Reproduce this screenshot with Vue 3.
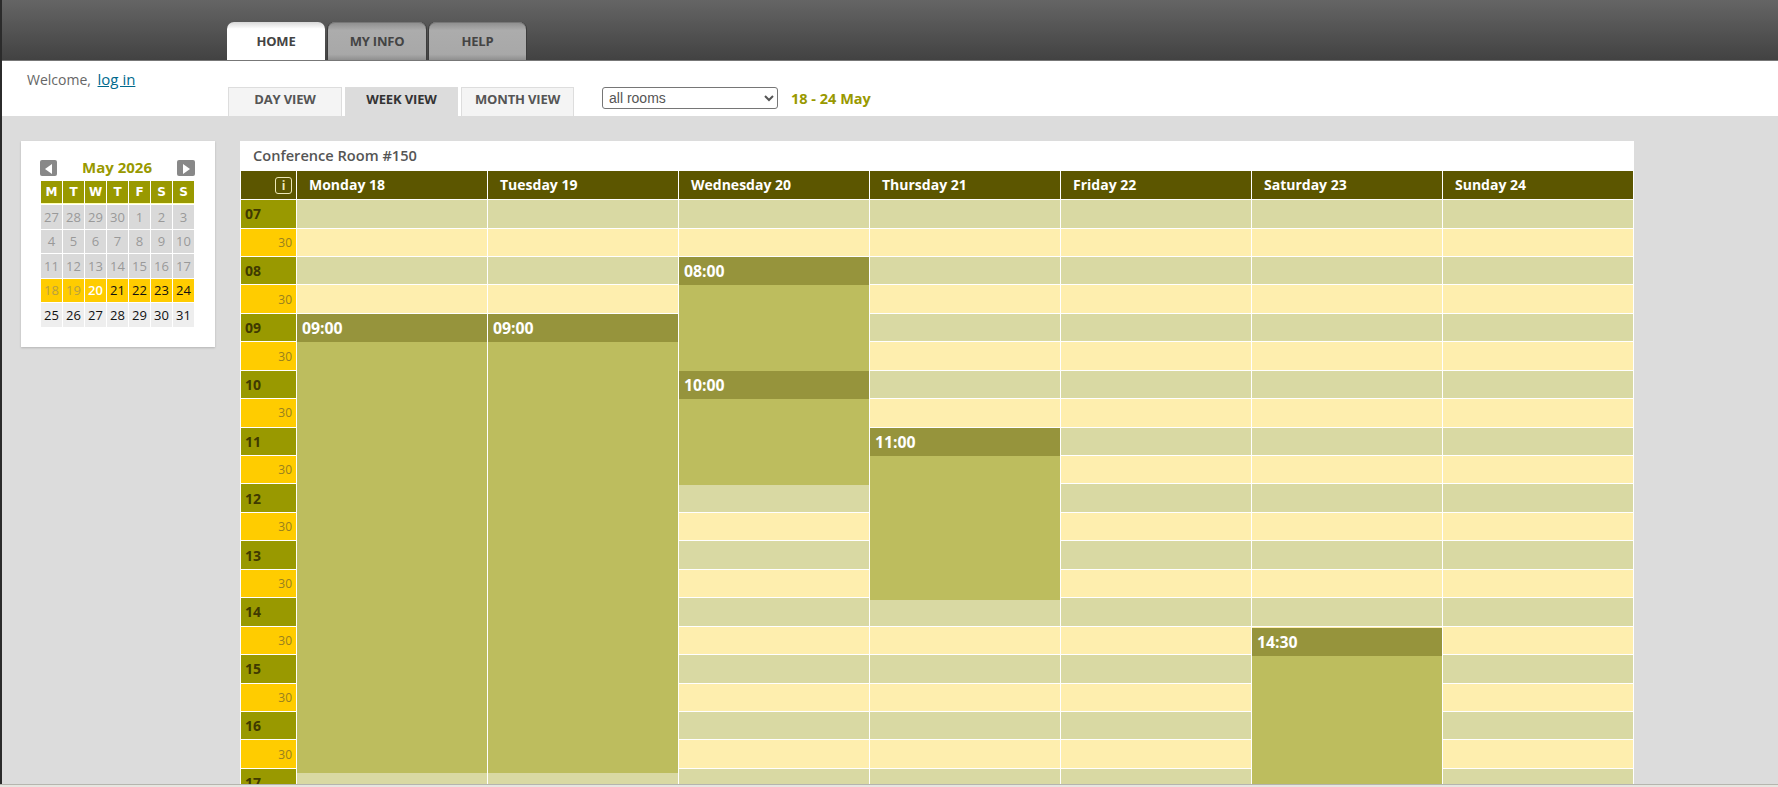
<template>
  <div class="page">
    <div class="topbar">
      <a class="tab is-active">HOME</a>
      <a class="tab">MY INFO</a>
      <a class="tab">HELP</a>
    </div>

    <div class="subbar">
      <div class="welcome">Welcome, <a class="login">log in</a></div>
      <div class="views">
        <a class="view">DAY VIEW</a>
        <a class="view is-active">WEEK VIEW</a>
        <a class="view">MONTH VIEW</a>
      </div>
      <select class="rooms">
        <option>all rooms</option>
      </select>
      <span class="range">18 - 24 May</span>
    </div>

    <div class="content">
      <aside class="side">
        <div class="month-nav">
          <span class="nav-btn"><svg width="17" height="16" viewBox="0 0 17 16"><path d="M12 3v10L5 8z" fill="#fff" /></svg></span>
          <span class="month-title">May 2026</span>
          <span class="nav-btn"><svg width="18" height="16" viewBox="0 0 18 16"><path d="M6 3v10L13 8z" fill="#fff" /></svg></span>
        </div>
        <div class="mini">
          <span v-for="(d, i) in weekLetters" :key="'h' + i" class="mini-head">{{ d }}</span>
          <span v-for="(d, i) in miniDays" :key="i" class="mini-day" :class="d.cls">{{ d.n }}</span>
        </div>
      </aside>

      <section class="main">
        <div class="room-title">Conference Room #150</div>
        <div class="sched">
          <div class="grid">
            <div class="head info-cell"><span class="info">i</span></div>
            <div v-for="d in days" :key="d" class="head">{{ d }}</div>
            <template v-for="s in slots" :key="s.key">
              <div class="time" :class="s.half ? 'time-half' : 'time-hour'">{{ s.label }}</div>
              <div v-for="n in 7" :key="n" class="cell" :class="s.half ? 'cell-half' : 'cell-hour'"></div>
            </template>
          </div>
          <div v-for="e in events" :key="e.day + e.label" class="event" :style="eventStyle(e)">
            <div class="event-head">{{ e.label }}</div>
          </div>
        </div>
      </section>
    </div>
  </div>
  <div class="page-end"></div>
</template>

<script setup>
const SLOT = 28.45;
const FIRST_HOUR = 7;

const weekLetters = ['M', 'T', 'W', 'T', 'F', 'S', 'S'];
const days = ['Monday 18', 'Tuesday 19', 'Wednesday 20', 'Thursday 21', 'Friday 22', 'Saturday 23', 'Sunday 24'];

const miniDays = [];
[27, 28, 29, 30].forEach((n) => miniDays.push({ n, cls: 'is-past' }));
for (let n = 1; n <= 17; n++) miniDays.push({ n, cls: 'is-past' });
miniDays.push({ n: 18, cls: 'is-week is-gone' }, { n: 19, cls: 'is-week is-gone' }, { n: 20, cls: 'is-week is-today' });
for (let n = 21; n <= 24; n++) miniDays.push({ n, cls: 'is-week' });
for (let n = 25; n <= 31; n++) miniDays.push({ n, cls: 'is-next' });

const slots = [];
for (let h = FIRST_HOUR; h <= 17; h++) {
  slots.push({ key: h + ':00', half: false, label: String(h).padStart(2, '0') });
  slots.push({ key: h + ':30', half: true, label: '30' });
}

const events = [
  { day: 0, start: 9, end: 17.07, label: '09:00' },
  { day: 1, start: 9, end: 17.07, label: '09:00' },
  { day: 2, start: 8, end: 10, label: '08:00' },
  { day: 2, start: 10, end: 12, label: '10:00' },
  { day: 3, start: 11, end: 14.03, label: '11:00' },
  { day: 5, start: 14.52, end: 18, label: '14:30' },
];

const eventStyle = (e) => ({
  left: 57 + e.day * 191 + 'px',
  top: 29.1 + (e.start - FIRST_HOUR) * 2 * SLOT + 'px',
  height: (e.end - e.start) * 2 * SLOT + 'px',
});
</script>

<style scoped>
.page {
  height: 784px;
  overflow: hidden;
  border-left: 2px solid #2b2b2b;
  background: #dcdcdc;
  font-family: "Open Sans", "Noto Sans", sans-serif;
}

.page-end {
  height: 3px;
  box-sizing: border-box;
  border-top: 1px solid #b5b5ae;
  background: #e6e6e0;
}

.topbar {
  height: 61px;
  box-sizing: border-box;
  padding-left: 225px;
  display: flex;
  align-items: flex-end;
  background: linear-gradient(#656565, #424242);
  border-bottom: 1px solid #777;
}

.tab {
  width: 98px;
  height: 38px;
  margin-right: 3px;
  padding-bottom: 1px;
  display: flex;
  align-items: center;
  justify-content: center;
  box-sizing: border-box;
  border-radius: 7px 7px 0 0;
  background: linear-gradient(#8c8c8c, #acacac 22%, #a8a8a8 85%, #8f8f8f);
  box-shadow: inset 0 1px 0 #777, 1px 0 0 #3c3c3c, -1px 0 0 #3c3c3c;
  color: #444;
  font-size: 13px;
  font-weight: 700;
  letter-spacing: -0.2px;
}

.tab:last-child {
  width: 97px;
}

.tab.is-active {
  background: linear-gradient(#d8d8d8, #fff 18%);
  box-shadow: none;
  color: #444;
}

.subbar {
  height: 55px;
  display: flex;
  background: #fff;
}

.welcome {
  width: 226px;
  box-sizing: border-box;
  padding: 8px 0 0 25px;
  color: #666;
  font-size: 14px;
}

.login {
  margin-left: 3px;
  color: #006a8e;
  font-size: 15px;
  text-decoration: underline;
}

.views {
  display: flex;
  gap: 3px;
  align-self: flex-end;
}

.view {
  width: 113px;
  height: 29px;
  padding-bottom: 6px;
  box-sizing: border-box;
  display: flex;
  align-items: center;
  justify-content: center;
  border: 1px solid #ddd;
  border-bottom: 0;
  background: #f4f4f4;
  color: #555;
  font-size: 13px;
  font-weight: 700;
  letter-spacing: -0.15px;
}

.view:first-child {
  width: 114px;
}

.view.is-active {
  background: #dcdcdc;
  border-color: #dcdcdc;
  color: #333;
}

.rooms {
  width: 176px;
  height: 22px;
  margin: 26px 0 0 28px;
  padding-left: 2px;
  border: 1px solid #767676;
  border-radius: 3px;
  background: #fff;
  color: #555;
  font-family: "Liberation Sans", sans-serif;
  font-size: 14px;
}

.range {
  margin: 28px 0 0 13px;
  color: #999900;
  font-size: 14.5px;
  font-weight: 700;
}

.content {
  display: flex;
  align-items: flex-start;
  padding: 25px 0 0 19px;
}

.side {
  width: 194px;
  height: 206px;
  box-sizing: border-box;
  padding: 19px 0 0 20px;
  margin-right: 25px;
  background: #fff;
  box-shadow: 0 1px 2px rgba(0, 0, 0, 0.18);
}

.month-nav {
  width: 154px;
  height: 21px;
  display: flex;
  justify-content: space-between;
}

.nav-btn {
  width: 17px;
  height: 16px;
  margin-left: -1px;
  border-radius: 2px;
  background: #888;
}

.nav-btn:last-child {
  width: 18px;
  margin-left: 0;
}

.month-title {
  color: #999900;
  font-size: 15px;
  font-weight: 700;
  line-height: 15px;
}

.mini {
  display: grid;
  grid-template-columns: repeat(7, 21px);
  grid-template-rows: 23px;
  grid-auto-rows: 23.5px;
  gap: 1px;
}

.mini-head {
  display: flex;
  align-items: center;
  justify-content: center;
  background: #999900;
  border-bottom: 1px solid #ffffb0;
  color: #fff;
  font-family: "DejaVu Sans", sans-serif;
  font-size: 12px;
  font-weight: 700;
}

.mini-day {
  display: flex;
  align-items: center;
  justify-content: center;
  font-size: 13px;
}

.is-past {
  background: #d9d9d9;
  color: #999;
}

.is-week {
  background: #ffcc00;
  color: #111;
}

.is-gone {
  color: #b8a040;
}

.is-today {
  color: #fff;
  font-weight: 600;
}

.is-next {
  background: #eeeeee;
  color: #111;
}

.main {
  width: 1394px;
  background: #fff;
}

.room-title {
  height: 30px;
  box-sizing: border-box;
  padding: 4px 0 0 13px;
  color: #555;
  font-size: 14.6px;
  font-weight: 600;
}

.sched {
  position: relative;
  padding-left: 1px;
}

.grid {
  display: grid;
  grid-template-columns: 55px repeat(7, 190px);
  grid-template-rows: 28.1px;
  grid-auto-rows: 27.45px;
  gap: 1px;
}

.head {
  display: flex;
  align-items: center;
  padding: 0 0 2px 12px;
  box-sizing: border-box;
  background: #5c5600;
  color: #fff;
  font-size: 14px;
  font-weight: 700;
}

.info-cell {
  justify-content: flex-end;
  padding: 0 4px 0 0;
}

.info {
  width: 17px;
  height: 17px;
  box-sizing: border-box;
  display: flex;
  align-items: center;
  justify-content: center;
  border: 1px solid #eee9b8;
  border-radius: 3px;
  color: #eee9b8;
  font-size: 12px;
  font-weight: 700;
}

.time {
  display: flex;
  align-items: center;
  font-size: 13px;
}

.time-hour {
  padding-left: 4px;
  background: #999900;
  color: #3f3a00;
  font-size: 14px;
  font-weight: 700;
}

.time-half {
  justify-content: flex-end;
  padding-right: 4px;
  background: #ffcc00;
  color: #98801f;
  font-size: 12px;
}

.cell-hour {
  background: #d9d9a3;
}

.cell-half {
  background: #feeeae;
}

.event {
  position: absolute;
  width: 190px;
  background: #bdbd5e;
}

.event-head {
  height: 28px;
  box-sizing: border-box;
  padding-left: 5px;
  display: flex;
  align-items: center;
  background: #96943c;
  color: #fff;
  font-size: 15.8px;
  font-weight: 700;
}
</style>

<style>
html,
body {
  margin: 0;
  overflow: hidden;
  background: #e6e6e0;
}
</style>
